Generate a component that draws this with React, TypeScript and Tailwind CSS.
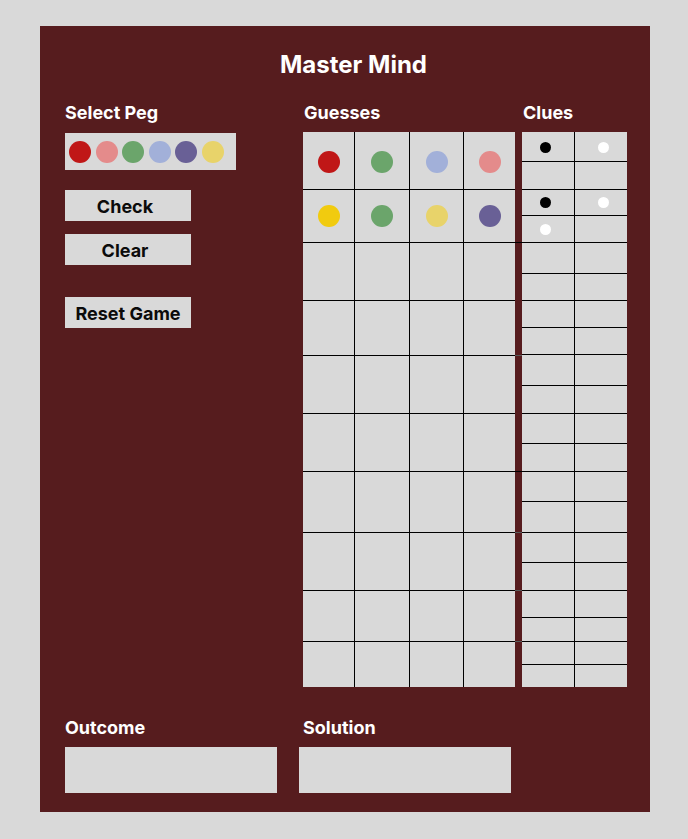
import React from "react";

const GUESS_ROWS = [57, 53, 58, 55, 58, 58, 61, 58, 51, 46];
const COL_W = [51, 55, 54, 52];
const CLUE_SUB: [number, number][] = [
  [29, 28],
  [26, 27],
  [31, 27],
  [27, 27],
  [31, 28],
  [30, 28],
  [30, 31],
  [30, 28],
  [27, 24],
  [23, 23],
];

const PALETTE = ["#c01717", "#e48b8b", "#6ba56b", "#a2b0d9", "#696096", "#e8d36a"];

const GUESSES: (string | null)[][] = [
  ["#c01717", "#6ba56b", "#a2b0d9", "#e48b8b"],
  ["#f1cb0f", "#6ba56b", "#e8d36a", "#696096"],
];

const CLUES: Record<string, string> = {
  "0-0-0": "#000000",
  "0-0-1": "#ffffff",
  "1-0-0": "#000000",
  "1-0-1": "#ffffff",
  "1-1-0": "#ffffff",
};

const GAP_LINES: Record<number, string> = {
  2: "#000000",
  4: "#5a5a5a",
  6: "#000000",
  7: "#5a5a5a",
  8: "#5a5a5a",
  9: "#5a5a5a",
};

const Label = ({ children, className = "" }: { children: React.ReactNode; className?: string }) => (
  <div className={"h-[21px] text-[18px] leading-[21px] font-bold text-white " + className}>{children}</div>
);

const Btn = ({ children, className = "" }: { children: React.ReactNode; className?: string }) => (
  <div
    className={
      "flex h-[31px] w-[126px] items-center justify-center bg-[#d9d9d9] pt-[1px] text-[18px] font-bold leading-[21px] text-[#0b0b0b] " +
      className
    }
  >
    {children}
  </div>
);

export default function App() {
  return (
    <div
      className="min-h-screen w-full bg-[#d9d9d9] pl-[40px] pt-[26px]"
      style={{ fontFamily: "Inter, 'Noto Sans', sans-serif" }}
    >
      <div className="flex h-[786px] w-[610px] flex-col bg-[#561c1e]">
        {/* Title */}
        <div className="mt-[25px] flex h-[27px] justify-center pl-[17px]">
          <div className="text-[24px] font-bold leading-[27px] text-white">Master Mind</div>
        </div>

        {/* Main row */}
        <div className="mt-[24px] flex pl-[25px]">
          {/* Left column */}
          <div className="flex w-[238px] flex-col">
            <Label>Select Peg</Label>
            <div className="mt-[10px] flex h-[37px] w-[171px] items-center gap-[4.6px] bg-[#d9d9d9] pl-[4px]">
              {PALETTE.map((c) => (
                <div key={c} className="h-[22px] w-[22px] rounded-full" style={{ backgroundColor: c }} />
              ))}
            </div>
            <Btn className="mt-[20px] pr-[6px]">Check</Btn>
            <Btn className="mt-[13px] pr-[6px]">Clear</Btn>
            <Btn className="mt-[32px]">Reset Game</Btn>
          </div>

          {/* Guesses */}
          <div className="flex w-[212px] flex-col">
            <Label className="pl-[1px]">Guesses</Label>
            <div className="mt-[9px] flex flex-col bg-[#d9d9d9]">
              {GUESS_ROWS.map((h, r) => (
                <div
                  key={r}
                  className={"flex " + (r > 0 ? "border-t border-black" : "")}
                  style={{ height: h }}
                >
                  {COL_W.map((w, c) => {
                    const color = GUESSES[r]?.[c];
                    return (
                      <div
                        key={c}
                        className={
                          "flex items-center justify-center " +
                          (c > 0 ? "border-l border-black " : "") +
                          (r === 0 ? "pt-[3px]" : "")
                        }
                        style={{ width: w }}
                      >
                        {color && <div className="h-[22px] w-[22px] rounded-full" style={{ backgroundColor: color }} />}
                      </div>
                    );
                  })}
                </div>
              ))}
            </div>
          </div>

          {/* Gap column with crossing lines */}
          <div className="flex w-[7px] flex-col">
            <div className="h-[21px]" />
            <div className="mt-[9px] flex flex-col">
              {GUESS_ROWS.map((h, r) => (
                <div
                  key={r}
                  className={GAP_LINES[r] ? "border-t" : ""}
                  style={{ height: h, borderTopColor: GAP_LINES[r] }}
                />
              ))}
            </div>
          </div>

          {/* Clues */}
          <div className="flex w-[105px] flex-col">
            <Label className="pl-[1px]">Clues</Label>
            <div className="mt-[9px] flex flex-col bg-[#d9d9d9]">
              {CLUE_SUB.map((pair, r) =>
                pair.map((h, s) => (
                  <div
                    key={r + "-" + s}
                    className={"flex " + (r > 0 || s > 0 ? "border-t border-black" : "")}
                    style={{ height: h }}
                  >
                    {[52, 53].map((w, c) => {
                      const color = CLUES[r + "-" + s + "-" + c];
                      return (
                        <div
                          key={c}
                          className={
                            "flex items-center justify-center " +
                            (c > 0 ? "border-l border-black pl-[4px] " : "pr-[5px] ") +
                            (r === 0 && s === 0 ? "pt-[1px]" : "")
                          }
                          style={{ width: w }}
                        >
                          {color && (
                            <div className="h-[11px] w-[11px] rounded-full" style={{ backgroundColor: color }} />
                          )}
                        </div>
                      );
                    })}
                  </div>
                ))
              )}
            </div>
          </div>
        </div>

        {/* Bottom row */}
        <div className="mt-[30px] flex pl-[25px]">
          <div className="flex w-[234px] flex-col">
            <Label>Outcome</Label>
            <div className="mt-[9px] h-[46px] w-[212px] bg-[#d9d9d9]" />
          </div>
          <div className="flex w-[212px] flex-col">
            <Label className="pl-[4px]">Solution</Label>
            <div className="mt-[9px] h-[46px] w-[212px] bg-[#d9d9d9]" />
          </div>
        </div>
      </div>
    </div>
  );
}
